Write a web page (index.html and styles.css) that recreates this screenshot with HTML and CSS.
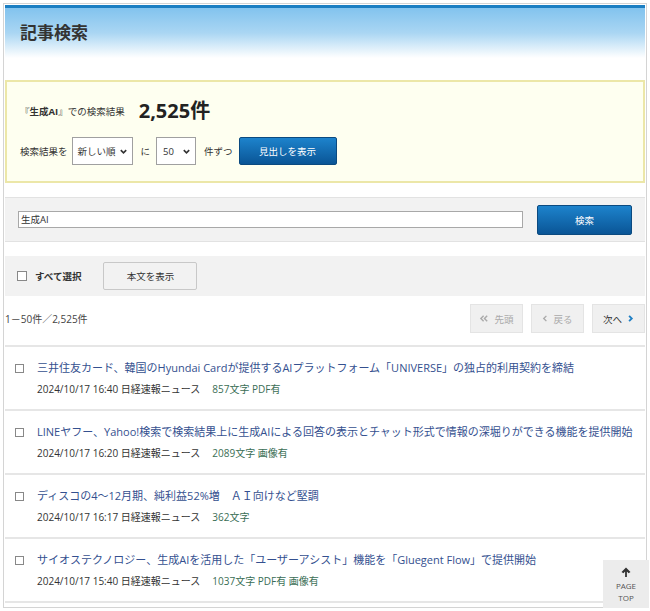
FILE: index.html
```html
<!DOCTYPE html>
<html lang="ja">
<head>
<meta charset="utf-8">
<title>記事検索</title>
<link rel="stylesheet" href="styles.css">
</head>
<body>
<div class="page">
  <header class="head">
    <h1 class="head-title">記事検索</h1>
  </header>

  <section class="summary">
    <div class="summary-row">
      <span class="summary-label">『<b>生成AI</b>』での検索結果</span>
      <span class="summary-count">2,525件</span>
    </div>
    <div class="summary-row controls">
      <span class="ctl-text">検索結果を</span>
      <span class="select sel-order"><span>新しい順</span><svg class="chev" viewBox="0 0 10 10"><polyline points="2,3.5 5,6.5 8,3.5"/></svg></span>
      <span class="ctl-text">に</span>
      <span class="select sel-num"><span>50</span><svg class="chev" viewBox="0 0 10 10"><polyline points="2,3.5 5,6.5 8,3.5"/></svg></span>
      <span class="ctl-text">件ずつ</span>
      <button class="btn-blue btn-heads">見出しを表示</button>
    </div>
  </section>

  <section class="search">
    <div class="search-input">生成AI</div>
    <button class="btn-blue btn-search">検索</button>
  </section>

  <section class="toolbar">
    <span class="check"></span>
    <span class="select-all">すべて選択</span>
    <button class="btn-gray">本文を表示</button>
  </section>

  <section class="countbar">
    <span class="count-text">1－50件／2,525件</span>
    <nav class="pager">
      <span class="pg disabled"><svg class="dbl" viewBox="0 0 12 10"><polyline points="5,2 2,5 5,8"/><polyline points="9,2 6,5 9,8"/></svg>先頭</span>
      <span class="pg disabled"><svg class="sgl" viewBox="0 0 8 10"><polyline points="5,2 2,5 5,8"/></svg>戻る</span>
      <span class="pg next">次へ<svg class="sgl" viewBox="0 0 8 10"><polyline points="3,2 6,5 3,8"/></svg></span>
    </nav>
  </section>

  <ul class="results">
    <li class="item">
      <span class="check"></span>
      <div class="item-body">
        <a class="item-title">三井住友カード、韓国のHyundai Cardが提供するAIプラットフォーム「UNIVERSE」の独占的利用契約を締結</a>
        <div class="meta">2024/10/17 16:40 日経速報ニュース<span class="meta-extra">857文字 PDF有</span></div>
      </div>
    </li>
    <li class="item">
      <span class="check"></span>
      <div class="item-body">
        <a class="item-title">LINEヤフー、Yahoo!検索で検索結果上に生成AIによる回答の表示とチャット形式で情報の深堀りができる機能を提供開始</a>
        <div class="meta">2024/10/17 16:20 日経速報ニュース<span class="meta-extra">2089文字 画像有</span></div>
      </div>
    </li>
    <li class="item">
      <span class="check"></span>
      <div class="item-body">
        <a class="item-title">ディスコの4～12月期、純利益52%増　ＡＩ向けなど堅調</a>
        <div class="meta">2024/10/17 16:17 日経速報ニュース<span class="meta-extra">362文字</span></div>
      </div>
    </li>
    <li class="item">
      <span class="check"></span>
      <div class="item-body">
        <a class="item-title">サイオステクノロジー、生成AIを活用した「ユーザーアシスト」機能を「Gluegent Flow」で提供開始</a>
        <div class="meta">2024/10/17 15:40 日経速報ニュース<span class="meta-extra">1037文字 PDF有 画像有</span></div>
      </div>
    </li>
  </ul>
</div>

<a class="pagetop">
  <svg viewBox="0 0 12 12"><path d="M6 1.5 L10.5 6 L8.6 7.3 L6.9 5.6 L6.9 11 L5.1 11 L5.1 5.6 L3.4 7.3 L1.5 6 Z"/></svg>
  <span>PAGE<br>TOP</span>
</a>
</body>
</html>
```

FILE: styles.css
```css
* { box-sizing: border-box; }
html, body { margin: 0; padding: 0; }
body {
  background: #fff;
  font-family: "Open Sans", "Noto Sans CJK JP", sans-serif;
  color: #333;
  width: 650px;
  height: 611px;
  overflow: hidden;
}
.page {
  margin: 3px;
  border: 1px solid #d4d4d4;
  padding: 1px;
  height: 605px;
  overflow: hidden;
}

/* header */
.head {
  border-top: 3px solid #1b7ec2;
  height: 53px;
  background: linear-gradient(#82c3ee 0%, #aad6f3 50%, #e6f3fb 85%, #ffffff 100%);
  display: flex;
  align-items: center;
  padding-left: 15px;
  padding-bottom: 4px;
}
.head-title {
  margin: 0;
  font-size: 17px;
  font-weight: bold;
  color: #333;
  font-family: "Noto Sans CJK JP", sans-serif;
}

/* summary box */
.summary {
  margin-top: 22px;
  border: 2px solid #ece7a8;
  background: #fefff0;
  padding: 17px 13px 16px;
  display: flex;
  flex-direction: column;
  gap: 14px;
}
.summary-row { display: flex; align-items: center; }
.summary-label { font-size: 9.5px; color: #333; }
.summary-label b { font-weight: bold; }
.summary-count {
  margin-left: 14px;
  font-size: 20px;
  font-weight: bold;
  line-height: 24px;
  color: #222;
}
.controls { height: 28px; }
.ctl-text { font-size: 9.5px; color: #333; white-space: nowrap; }
.select {
  height: 28px;
  border: 1px solid #a0a0a0;
  background: #fff;
  display: flex;
  align-items: center;
  justify-content: space-between;
  padding: 0 4px 0 6px;
  font-size: 9.5px;
  color: #333;
  white-space: nowrap;
}
.sel-order { width: 61px; margin: 0 8px 0 4px; padding-left: 5px; }
.sel-num { width: 40px; margin: 0 8px 0 6px; }
.chev { width: 9px; height: 9px; fill: none; stroke: #333; stroke-width: 1.8; flex: none; }
.btn-blue {
  border: 1px solid #0b4a80;
  border-radius: 2px;
  background: linear-gradient(#1d83cc, #0a5596);
  color: #fff;
  font-family: "Noto Sans CJK JP", sans-serif;
  font-size: 9.5px;
  padding: 0;
}
.btn-heads { width: 98px; height: 28px; margin-left: 6px; }

/* search */
.search {
  margin-top: 14px;
  height: 45px;
  background: #f2f2f2;
  border-top: 1px solid #e2e2e2;
  border-bottom: 1px solid #e2e2e2;
  display: flex;
  align-items: center;
  padding: 0 13px 0 13px;
  gap: 14px;
}
.search-input {
  flex: 1;
  height: 17px;
  border: 1px solid #a8a8a8;
  background: #fff;
  font-size: 9.5px;
  line-height: 15px;
  padding-left: 2px;
  color: #333;
}
.btn-search { width: 95px; height: 30px; }

/* toolbar */
.toolbar {
  margin-top: 14px;
  height: 40px;
  background: #f2f2f2;
  display: flex;
  align-items: center;
  padding-left: 12px;
}
.check {
  width: 10px;
  height: 10px;
  border: 1px solid #888;
  background: #fff;
  flex: none;
}
.select-all {
  margin-left: 8px;
  font-size: 9.5px;
  font-weight: bold;
  color: #333;
}
.btn-gray {
  margin-left: 22px;
  width: 94px;
  height: 28px;
  border: 1px solid #c8c8c8;
  border-radius: 2px;
  background: #f2f2f2;
  font-family: "Noto Sans CJK JP", sans-serif;
  font-size: 9.5px;
  color: #333;
}

/* count bar */
.countbar {
  height: 51px;
  border-bottom: 2px solid #e6e6e6;
  display: flex;
  align-items: flex-start;
  justify-content: space-between;
  padding-top: 8px;
}
.count-text {
  font-size: 10px;
  line-height: 29px;
  margin-top: 1px;
  color: #444;
}
.pager { display: flex; gap: 8px; }
.pg {
  width: 53px;
  height: 29px;
  background: #f0f0f0;
  border: 1px solid #e4e4e4;
  display: flex;
  align-items: center;
  justify-content: center;
  gap: 4px;
  font-size: 9.5px;
  color: #333;
  font-family: "Noto Sans CJK JP", sans-serif;
}
.pg svg { height: 9px; fill: none; stroke-width: 1.6; }
.pg.disabled { color: #aaa; }
.pg.disabled svg { stroke: #aaa; }
.pg svg.dbl { width: 11px; }
.pg svg.sgl { width: 7px; }
.pg.next svg { width: 8px; stroke: #1f7fc4; stroke-width: 2; }

/* results */
.results { list-style: none; margin: 0; padding: 0; }
.item {
  height: 64px;
  border-bottom: 2px solid #e6e6e6;
  display: flex;
  align-items: flex-start;
  padding: 13px 0 0 10px;
}
.item .check { margin-top: 4px; width: 9px; height: 9px; }
.item-body { margin-left: 13px; }
.item-title {
  display: block;
  font-size: 11px;
  line-height: 16px;
  color: #34508f;
  white-space: nowrap;
}
.meta {
  margin-top: 6px;
  font-size: 10px;
  line-height: 14px;
  color: #333;
}
.meta-extra { margin-left: 12px; color: #3a6e55; }

/* page top */
.pagetop {
  position: fixed;
  right: 1px;
  bottom: 3px;
  width: 46px;
  height: 48px;
  background: #ececec;
  display: flex;
  flex-direction: column;
  align-items: center;
  padding-top: 6px;
}
.pagetop svg { width: 12px; height: 12px; fill: #333; }
.pagetop span {
  margin-top: 2px;
  font-size: 8px;
  line-height: 12px;
  text-align: center;
  color: #555;
}
```
